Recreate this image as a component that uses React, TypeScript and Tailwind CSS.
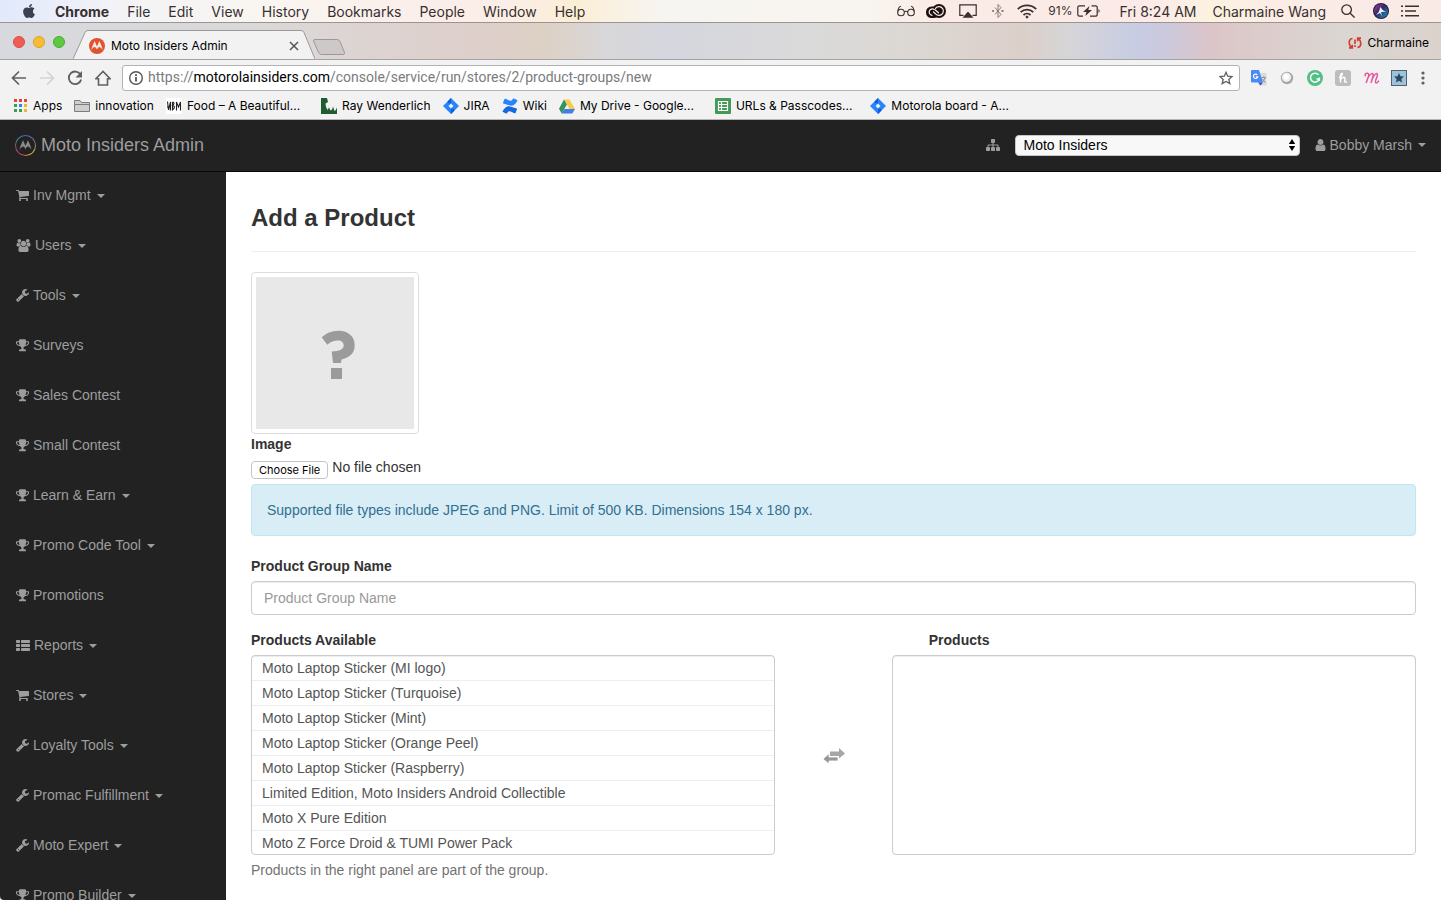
import React, { ReactNode } from "react";
import { FaApple } from "react-icons/fa";

type IconType = React.ComponentType<{ className?: string }>;

function Trophy({ className }: { className?: string }) {
  return (
    <svg viewBox="0 0 1664 1664" className={className} fill="currentColor" aria-hidden="true">
      <path d="M458 777q-74-162-74-369h-256v96q0 78 94.500 162t235.500 111zM1536 504v-96h-256q0 207-74 369 141-27 235.500-111t94.500-162zM1664 376v128q0 71-41.500 143t-112 130-173 97.500-215.500 44.500q-42 54-95 95-38 34-52.500 72.500t-14.500 89.500q0 54 30.500 91t97.500 37q75 0 133.500 45.500t58.500 114.500v64q0 14-9 23t-23 9h-832q-14 0-23-9t-9-23v-64q0-69 58.500-114.500t133.500-45.500q67 0 97.500-37t30.500-91q0-51-14.500-89.500t-52.500-72.500q-53-41-95-95-113-5-215.500-44.500t-173-97.500-112-130-41.500-143v-128q0-40 28-68t68-28h288v-96q0-66 47-113t113-47h576q66 0 113 47t47 113v96h288q40 0 68 28t28 68z" />
    </svg>
  );
}

function Cart({ className }: { className?: string }) {
  return (
    <svg viewBox="64 128 1664 1664" className={className} fill="currentColor" aria-hidden="true">
      <path d="M704 1536q0 52-38 90t-90 38-90-38-38-90 38-90 90-38 90 38 38 90zm896 0q0 52-38 90t-90 38-90-38-38-90 38-90 90-38 90 38 38 90zm128-1088v512q0 24-16.500 42.500t-40.500 21.500l-1044 122q13 60 13 70 0 16-24 64h920q26 0 45 19t19 45-19 45-45 19h-1024q-26 0-45-19t-19-45q0-11 8-31.500t16-36 21.500-40 15.500-29.500l-177-823h-204q-26 0-45-19t-19-45 19-45 45-19h256q16 0 28.500 6.500t19.500 15.500 13 24.500 8 26 5.500 29.500 4.500 26h1201q26 0 45 19t19 45z" />
    </svg>
  );
}

function Wrench({ className }: { className?: string }) {
  return (
    <svg viewBox="64 128 1664 1664" className={className} fill="currentColor" aria-hidden="true">
      <path d="M448 1472q0-26-19-45t-45-19-45 19-19 45 19 45 45 19 45-19 19-45zm644-420l-682 682q-37 37-90 37-52 0-91-37l-106-108q-38-36-38-90 0-53 38-91l681-681q39 98 114.500 173.500t173.500 114.500zm634-435q0 39-23 106-47 134-164.500 217.500t-258.500 83.500q-185 0-316.500-131.500t-131.500-316.500 131.500-316.500 316.500-131.500q58 0 121.500 16.500t107.500 46.500q16 11 16 28t-16 28l-293 169v224l193 107q5-3 79-48.500t135.500-81 70.500-35.500q15 0 23.500 10t8.500 25z" />
    </svg>
  );
}

function Users({ className }: { className?: string }) {
  return (
    <svg viewBox="0 0 1920 1792" className={className} fill="currentColor" aria-hidden="true">
      <path d="M593 896q-162 5-265 128h-134q-82 0-138-40.500t-56-118.500q0-353 124-353 6 0 43.500 21t97.500 42.500 119 21.500q67 0 133-23-5 37-5 66 0 159 93 293zm1071 637q0 120-73 189.500t-194 69.500h-874q-121 0-194-69.500t-73-189.500q0-53 3.500-103.500t14-109 26.500-108.500 43-97.500 62-81 85.500-53.500 111.500-20q10 0 43 21.500t73 48 107 48 135 21.500 135-21.500 107-48 73-48 43-21.500q61 0 111.500 20t85.500 53.500 62 81 43 97.500 26.500 108.500 14 109 3.500 103.500zm-1024-1277q0 106-75 181t-181 75-181-75-75-181 75-181 181-75 181 75 75 181zm704 384q0 159-112.500 271.500t-271.500 112.500-271.500-112.500-112.500-271.500 112.500-271.500 271.500-112.500 271.500 112.500 112.500 271.500zm576 225q0 78-56 118.500t-138 40.500h-134q-103-123-265-128 93-134 93-293 0-29-5-66 66 23 133 23 59 0 119-21.500t97.500-42.500 43.500-21q124 0 124 353zm-128-609q0 106-75 181t-181 75-181-75-75-181 75-181 181-75 181 75 75 181z" />
    </svg>
  );
}

function ListRows({ className }: { className?: string }) {
  return (
    <svg viewBox="0 0 14 13" className={className} fill="currentColor" aria-hidden="true">
      <rect x="0" y="1" width="4" height="3" rx=".7" />
      <rect x="5" y="1" width="9" height="3" rx=".7" />
      <rect x="0" y="5" width="4" height="3" rx=".7" />
      <rect x="5" y="5" width="9" height="3" rx=".7" />
      <rect x="0" y="9" width="4" height="3" rx=".7" />
      <rect x="5" y="9" width="9" height="3" rx=".7" />
    </svg>
  );
}

function Person({ className }: { className?: string }) {
  return (
    <svg viewBox="256 128 1280 1536" className={className} fill="currentColor" aria-hidden="true">
      <path d="M1536 1399q0 109-62.500 187t-150.500 78h-854q-88 0-150.500-78t-62.500-187q0-85 8.500-160.500t31.500-152 58.500-131 94-89 134.500-34.500q131 128 313 128t313-128q76 0 134.500 34.500t94 89 58.500 131 31.500 152 8.500 160.500zm-256-887q0 159-112.500 271.500t-271.500 112.500-271.500-112.500-112.500-271.500 112.500-271.500 271.500-112.500 271.500 112.500 112.500 271.500z" />
    </svg>
  );
}

function Sitemap({ className }: { className?: string }) {
  return (
    <svg viewBox="0 128 1792 1536" className={className} fill="currentColor" aria-hidden="true">
      <path d="M1792 1248v320q0 40-28 68t-68 28h-320q-40 0-68-28t-28-68v-320q0-40 28-68t68-28h96v-192h-512v192h96q40 0 68 28t28 68v320q0 40-28 68t-68 28h-320q-40 0-68-28t-28-68v-320q0-40 28-68t68-28h96v-192h-512v192h96q40 0 68 28t28 68v320q0 40-28 68t-68 28h-320q-40 0-68-28t-28-68v-320q0-40 28-68t68-28h96v-192q0-52 38-90t90-38h512v-192h-96q-40 0-68-28t-28-68v-320q0-40 28-68t68-28h320q40 0 68 28t28 68v320q0 40-28 68t-68 28h-96v192h512q52 0 90 38t38 90v192h96q40 0 68 28t28 68z" />
    </svg>
  );
}

const navItems: { label: string; icon: IconType; iconClass: string; menu?: boolean }[] = [
  { label: "Inv Mgmt", icon: Cart, iconClass: "w-[13px]", menu: true },
  { label: "Users", icon: Users, iconClass: "w-[15px]", menu: true },
  { label: "Tools", icon: Wrench, iconClass: "w-[13px]", menu: true },
  { label: "Surveys", icon: Trophy, iconClass: "w-[13px]" },
  { label: "Sales Contest", icon: Trophy, iconClass: "w-[13px]" },
  { label: "Small Contest", icon: Trophy, iconClass: "w-[13px]" },
  { label: "Learn & Earn", icon: Trophy, iconClass: "w-[13px]", menu: true },
  { label: "Promo Code Tool", icon: Trophy, iconClass: "w-[13px]", menu: true },
  { label: "Promotions", icon: Trophy, iconClass: "w-[13px]" },
  { label: "Reports", icon: ListRows, iconClass: "w-[14px]", menu: true },
  { label: "Stores", icon: Cart, iconClass: "w-[13px]", menu: true },
  { label: "Loyalty Tools", icon: Wrench, iconClass: "w-[13px]", menu: true },
  { label: "Promac Fulfillment", icon: Wrench, iconClass: "w-[13px]", menu: true },
  { label: "Moto Expert", icon: Wrench, iconClass: "w-[13px]", menu: true },
  { label: "Promo Builder", icon: Trophy, iconClass: "w-[13px]", menu: true },
];

const products = [
  "Moto Laptop Sticker (MI logo)",
  "Moto Laptop Sticker (Turquoise)",
  "Moto Laptop Sticker (Mint)",
  "Moto Laptop Sticker (Orange Peel)",
  "Moto Laptop Sticker (Raspberry)",
  "Limited Edition, Moto Insiders Android Collectible",
  "Moto X Pure Edition",
  "Moto Z Force Droid & TUMI Power Pack",
];

function Caret() {
  return <span className="ml-[2px] h-0 w-0 border-x-4 border-t-4 border-x-transparent border-t-current" />;
}

function Batwing({ className, fill }: { className: string; fill: string }) {
  return (
    <svg viewBox="0 0 24 24" className={className} aria-hidden="true">
      <path fill={fill} d="M8.500 4.500 L12 12.500 L15.500 4.500 C17.500 9 19.800 13.500 20.500 18 C19 15.500 17 13.500 15.500 13.500 C14 13.500 12.800 15 12 17.500 C11.200 15 10 13.500 8.500 13.500 C7 13.500 5 15.500 3.500 18 C4.200 13.500 6.500 9 8.500 4.500Z" />
    </svg>
  );
}

/* ---------- macOS menu bar ---------- */

function MenuBar() {
  return (
    <header className="flex h-[23px] shrink-0 items-center justify-between border-b border-[#9d9490] bg-[linear-gradient(90deg,#e2e9fb_0%,#f3f3f7_8%,#f9f6f1_18%,#fbeeea_30%,#fbeee8_35%,#fbeed6_40%,#f7f5f1_46%,#f8f5f0_60%,#fbebe6_65%,#fbeae7_80%,#fcf2e0_84%,#fbece6_89%,#f9eae6_100%)] pr-[22px] pl-[21px] text-[14px] text-[#38302f]">
      <nav aria-label="Application menu" className="flex items-center gap-[18px]">
        <FaApple className="size-[16px] text-[#3a4152]" />
        <span className="font-bold">Chrome</span>
        <span>File</span>
        <span>Edit</span>
        <span>View</span>
        <span>History</span>
        <span>Bookmarks</span>
        <span>People</span>
        <span>Window</span>
        <span>Help</span>
      </nav>
      <div className="flex items-center">
        <svg viewBox="0 0 18 12" className="mr-[11px] h-[12px] w-[18px]" fill="none" stroke="currentColor" strokeWidth="1.100">
          <circle cx="4" cy="7.500" r="3.300" />
          <circle cx="14" cy="7.500" r="3.300" />
          <path d="M7.300 7 Q9 5.500 10.700 7 M.8 6.500 Q1.500 1.500 4 1.300 M17.200 6.500 Q16.500 1.500 14 1.300" />
        </svg>
        <svg viewBox="0 0 20 14" className="mr-[13px] h-[14px] w-[20px]">
          <rect x="0" y="2.500" width="13" height="11.500" rx="5.500" fill="#1c1010" />
          <circle cx="13" cy="7" r="7" fill="#1c1010" />
          <g fill="none" stroke="#fbeeea" strokeWidth="1.200" strokeLinecap="round">
            <path d="M9.500 4.300A4.400 4.400 0 1 1 13 11.400Q11 11.400 9.500 9.800L7.500 8M8.200 5.500A3.200 3.200 0 1 0 6 11.300M12.500 8.800 9.300 6" />
          </g>
        </svg>
        <svg viewBox="0 0 18 14" className="mr-[15px] h-[14px] w-[18px]">
          <path fill="none" stroke="currentColor" strokeWidth="1.200" d="M4.500 11.300H.8V.8h16.400v10.500h-3.700" />
          <path fill="currentColor" d="m9 7.500 5.500 6.200h-11z" />
        </svg>
        <svg viewBox="0 0 12 16" className="mr-[13px] h-[16px] w-[12px]" fill="none" stroke="#857c7b" strokeWidth="1">
          <path d="m3 4.500 6 7L6 14.500v-13l3 3-6 7" />
          <path strokeWidth="1.800" d="M.2 8H2M4.800 8h2M9.500 8h2" />
        </svg>
        <svg viewBox="0 0 20 15" className="mr-[11px] h-[15px] w-[20px]" fill="none" stroke="currentColor" strokeWidth="1.800">
          <path d="M.8 5.200a13.200 13.200 0 0 1 18.400 0M3.700 8.200a9 9 0 0 1 12.600 0M6.500 11a5 5 0 0 1 7 0" />
          <circle cx="10" cy="13" r="1" fill="currentColor" strokeWidth="1" />
        </svg>
        <span className="mr-[5px] text-[12px]">91%</span>
        <svg viewBox="0 0 24 12" className="mr-[18px] h-[12px] w-[24px]">
          <path fill="none" stroke="currentColor" strokeWidth="1.200" d="M8 .8H2.500a1.700 1.700 0 0 0-1.700 1.700v7a1.700 1.700 0 0 0 1.700 1.700H6M14.500 .8h4a1.700 1.700 0 0 1 1.700 1.700v7a1.700 1.700 0 0 1-1.700 1.700H13" />
          <path fill="currentColor" d="M12.500 1 6 7h3.500L8.300 11 15 5h-3.700zM21.500 4q2.300 2 0 4z" />
        </svg>
        <span className="mr-[16px]">Fri 8:24 AM</span>
        <span className="mr-[15px]">Charmaine Wang</span>
        <svg viewBox="0 0 14 14" className="mr-[18px] size-[14px]" fill="none" stroke="currentColor" strokeWidth="1.300">
          <circle cx="5.600" cy="5.600" r="4.800" />
          <path d="m9.200 9.200 4.400 4.400" />
        </svg>
        <svg viewBox="0 0 16 16" className="mr-[12px] size-[16px]">
          <defs>
            <linearGradient id="siri" x1="0" y1="0" x2="1" y2="1">
              <stop offset="0" stopColor="#c03a8e" />
              <stop offset=".45" stopColor="#2f2a68" />
              <stop offset="1" stopColor="#1b9cc4" />
            </linearGradient>
          </defs>
          <circle cx="8" cy="8" r="8" fill="#1f1b3c" />
          <circle cx="8" cy="8" r="7" fill="url(#siri)" />
          <path fill="#e8f3ff" d="M7.500 4q1.500 3.500 5.500 5-3.500-.5-5 .5l1 4-2-3.500L3 12q3.500-3 4.500-8Z" />
        </svg>
        <svg viewBox="0 0 18 12" className="h-[12px] w-[18px]" fill="currentColor">
          <path d="M0 .5h2v1.600H0zM4 .5h14v1.600H4zM0 5.200h2v1.600H0zM4 5.200h11v1.600H4zM0 9.900h2v1.600H0zM4 9.900h14v1.600H4z" />
        </svg>
      </div>
    </header>
  );
}

/* ---------- Browser chrome ---------- */

function TabStrip() {
  return (
    <div className="flex h-[36px] shrink-0 justify-between bg-[linear-gradient(90deg,#d8d9de_0%,#d9d9da_15%,#dcd6d4_22%,#decfcb_33%,#ddd1c5_38%,#d8d7d9_42%,#d5d6de_46%,#dadada_56%,#dcd7d2_64%,#dccfca_71%,#d6d5d7_74%,#c7cce3_79%,#ccc9dc_81%,#dcc5c8_84%,#dccdcc_88%,#dad6d2_93%,#dbd2cc_100%)] pl-[13px]">
      <div className="flex">
        <div className="flex items-center gap-[8px] pt-[2px]">
          <span className="size-[12px] rounded-full border border-[#dd4b44] bg-[#ee5c54]" />
          <span className="size-[12px] rounded-full border border-[#dfa023] bg-[#f8bd32]" />
          <span className="size-[12px] rounded-full border border-[#48ad31] bg-[#5dc841]" />
        </div>
        <div className="relative ml-[8px] flex w-[242px] items-center pt-[9px] pl-[16px]">
          <svg viewBox="0 0 242 29" preserveAspectRatio="none" className="absolute bottom-0 left-0 h-[29px] w-full" aria-hidden="true">
            <path fill="#f2f2f2" stroke="#999" d="M0 29 L12 2.500 Q13 .5 15 .5 H228 Q230 .5 231 2.500 L242 29" />
          </svg>
          <svg viewBox="0 0 16 16" className="relative size-[16px]" aria-hidden="true">
            <circle cx="8" cy="8" r="8" fill="#e0532f" />
            <path fill="#f6e9e2" d="M5.700 3 8 8.500 10.300 3Q13 8 13.700 12 12 9 10.300 9 9 9 8 11.500 7 9 5.700 9 4 9 2.300 12 3 8 5.700 3Z" />
          </svg>
          <span className="relative ml-[6px] text-[12px] text-black">Moto Insiders Admin</span>
          <button aria-label="Close tab" className="relative mr-[16px] ml-auto">
            <svg viewBox="0 0 10 10" className="size-[10px]" stroke="#555" strokeWidth="1.500">
              <path d="m1 1 8 8M9 1 1 9" />
            </svg>
          </button>
        </div>
        <button aria-label="New tab" className="mt-[16px] -ml-[3px] h-[16px]">
          <svg viewBox="0 0 34 16" className="h-[16px] w-[34px]">
            <path fill="#ccc9c8" stroke="#999" d="M3 .5H25Q27 .5 28 2.500L32.500 13.500Q33 15.500 31 15.500H9.500Q7.500 15.500 6.500 13.500L1.500 2Q1 .5 3 .5Z" />
          </svg>
        </button>
      </div>
      <div className="flex items-center gap-[5px] pt-[3px] pr-[12px] text-[12px] text-black">
        <svg viewBox="0 0 14 12" className="h-[12px] w-[14px]" fill="none" stroke="#d23f31" strokeWidth="1.700">
          <path d="M4.500 1.500Q1 2 1.200 6q.1 2.500 2.300 4.300M4.300 7.800v3H1M9.500 10.500Q13 10 12.800 6q-.1-2.500-2.300-4.300M9.700 4.200v-3H13M7 2.500V7M7 8.300V10" />
        </svg>
        <span>Charmaine</span>
      </div>
    </div>
  );
}

function Toolbar() {
  return (
    <div className="flex h-[38px] shrink-0 items-center border-t border-[#a3a3a3] bg-[#f2f2f2] pr-[14px] pb-[2px] pl-[11px] text-[#5f5f64]">
      <div className="flex items-center gap-[12px]">
        <button aria-label="Back">
          <svg viewBox="0 0 16 16" className="size-[16px]" fill="none" stroke="currentColor" strokeWidth="1.700">
            <path d="M15 8H2M8 1.500 1.500 8 8 14.500" />
          </svg>
        </button>
        <button aria-label="Forward" className="text-[#d3d3d5]">
          <svg viewBox="0 0 16 16" className="size-[16px]" fill="none" stroke="currentColor" strokeWidth="1.700">
            <path d="M1 8h13M8 1.500 14.500 8 8 14.500" />
          </svg>
        </button>
        <button aria-label="Reload">
          <svg viewBox="0 0 16 16" className="size-[16px]">
            <path fill="none" stroke="currentColor" strokeWidth="1.800" d="M13.500 4.500A6.300 6.300 0 1 0 14.200 9.500" />
            <path fill="currentColor" d="M15 1v6.500H8.500z" />
          </svg>
        </button>
        <button aria-label="Home">
          <svg viewBox="0 0 16 16" className="size-[16px]" fill="none" stroke="currentColor" strokeWidth="1.600">
            <path d="M.8 8.800 8 1.500l7.200 7.300H12.500V15H3.500V8.800Z" />
          </svg>
        </button>
      </div>
      <div className="ml-[11px] flex h-[26px] min-w-0 flex-1 items-center rounded-[3px] border border-[#b3b3b3] bg-white px-[6px]">
        <svg viewBox="0 0 14 14" className="size-[14px] shrink-0" fill="none" stroke="#55555a" strokeWidth="1.400">
          <circle cx="7" cy="7" r="6.300" />
          <path strokeWidth="1.800" d="M7 6v4.500M7 3.200V5" />
        </svg>
        <p className="ml-[5px] flex-1 truncate font-['Roboto',sans-serif] text-[14px] text-[#7b7b7b]">
          https://<span className="text-black">motorolainsiders.com</span>/console/service/run/stores/2/product-groups/new
        </p>
        <button aria-label="Bookmark this page">
          <svg viewBox="0 0 14 14" className="size-[14px]" fill="none" stroke="#5f5f64" strokeWidth="1.300">
            <path d="m7 1.300 1.700 3.900 4.300.4-3.200 2.800 1 4.200L7 10.400l-3.800 2.200 1-4.200L1 5.600l4.300-.4z" />
          </svg>
        </button>
      </div>
      <div className="ml-[11px] flex items-center gap-[12px]">
        <svg viewBox="0 0 16 16" className="size-[16px]">
          <path fill="#dadada" d="M6 3h9.500v12.500H8z" />
          <path fill="#4a8af4" d="M1 0h7l4 12.500H1a1 1 0 0 1-1-1V1a1 1 0 0 1 1-1z" />
          <path fill="#3458c9" d="M7 12.500h5L9.500 15.500z" />
          <path fill="none" stroke="#fff" strokeWidth="1.200" d="M6.300 4.800a2.200 2.200 0 1 0 .5 2H4.800" />
          <path fill="none" stroke="#8296a5" strokeWidth="1" d="M10.500 7.500h4.500M12.700 6.500v1M14 7.500q-.8 3-2.500 4.500M11.500 9q1 2 3 3.500" />
        </svg>
        <svg viewBox="0 0 16 16" className="size-[16px]">
          <circle cx="8" cy="8" r="6.200" fill="#a7a7a7" />
          <circle cx="7.500" cy="7.300" r="4.600" fill="#f0f0f0" />
          <circle cx="7" cy="7" r="2.500" fill="#fff" />
        </svg>
        <svg viewBox="0 0 16 16" className="size-[16px]">
          <circle cx="8" cy="8" r="8" fill="#52bf84" />
          <path fill="none" stroke="#fff" strokeWidth="1.500" d="M11.500 4.800A4.500 4.500 0 1 0 12.300 9H9.500M12.400 7.500V11" />
        </svg>
        <svg viewBox="0 0 16 16" className="size-[16px]">
          <rect width="16" height="16" rx="3" fill="#bdbdbd" />
          <path fill="none" stroke="#fff" strokeWidth="1.500" d="M4 7.500q3-1 3.300-4Q5.500 3 5.500 8v4.500M5.500 9.500q3-3.500 4.300-1.500.8 1.500-.3 3.500.8 1.500 2.500 0" />
        </svg>
        <svg viewBox="0 0 18 16" className="h-[16px] w-[16px] overflow-visible" fill="none" stroke="#e94f9b" strokeWidth="1.600" strokeLinecap="round">
          <path d="M2.500 5.500Q2 2.500 5 2.500q2 .5 1 4L3.500 13.500Q6.500 3.500 10.500 2.800q1.500.5.500 4L9 13.500Q12 3.500 15.500 2.800q1.500.7 0 4.500-2.500 5.500-1 6.200 1.500.3 3-2" />
        </svg>
        <svg viewBox="0 0 16 16" className="size-[16px]">
          <rect x=".5" y=".5" width="15" height="15" fill="#9dc3da" stroke="#52616d" />
          <path fill="#2b485e" d="m8 3 1.400 3.300 3.600.3-2.700 2.400.8 3.500L8 10.700l-3.100 1.800.8-3.500L3 6.600l3.600-.3z" />
        </svg>
        <button aria-label="Browser menu">
          <svg viewBox="0 0 8 16" className="h-[16px] w-[8px]" fill="currentColor">
            <circle cx="4" cy="3" r="1.600" />
            <circle cx="4" cy="8" r="1.600" />
            <circle cx="4" cy="13" r="1.600" />
          </svg>
        </button>
      </div>
    </div>
  );
}

function Jira() {
  return (
    <svg viewBox="0 0 16 16" className="size-[16px] shrink-0">
      <path fill="#2684ff" d="m8 0 8 8-8 8-8-8z" />
      <path fill="#0f5fd6" d="M8 0 4.500 3.500Q4.500 6 8 5.500zM8 16l3.500-3.500Q11.500 10 8 10.500z" />
      <path fill="#f2f2f2" d="m8 5.500 2.500 2.500L8 10.500 5.500 8z" />
    </svg>
  );
}

function Bookmark({ icon, children }: { icon: ReactNode; children: ReactNode }) {
  return (
    <a href="#" className="flex items-center gap-[5px] whitespace-nowrap">
      {icon}
      {children}
    </a>
  );
}

function BookmarkBar() {
  return (
    <nav aria-label="Bookmarks" className="flex h-[23px] shrink-0 items-start gap-[12px] border-b border-[#b6b4b6] bg-[#f2f2f2] pl-[14px] text-[12px] leading-[18px] text-black">
      <Bookmark
        icon={
          <svg viewBox="0 0 14 14" className="size-[14px]">
            <path fill="#ea4335" d="M0 0h3v3H0zM5 0h3v3H5zM10 0h3v3h-3z" />
            <path fill="#34a05a" d="M0 5h3v3H0zM0 10h3v3H0zM5 10h3v3H5z" />
            <path fill="#2f86eb" d="M5 5h3v3H5z" />
            <path fill="#f6b32c" d="M10 5h3v3h-3zM10 10h3v3h-3z" />
          </svg>
        }
      >
        Apps
      </Bookmark>
      <Bookmark
        icon={
          <svg viewBox="0 0 16 14" className="h-[14px] w-[16px]">
            <path fill="#cfcfcf" stroke="#7c7c7c" d="M.5 1.500h5.500l1.500 2h8v9H.5zM.5 5.500h15" />
          </svg>
        }
      >
        innovation
      </Bookmark>
      <Bookmark
        icon={
          <svg viewBox="0 0 16 16" className="size-[16px]">
            <path fill="#fff" d="M0 0h16v16H0z" />
            <path fill="none" stroke="#222" strokeWidth="1.100" d="M1.500 3.500 2.500 12M2.500 12 4.500 4v8.500M1 9h4M6.500 4v8.500M6.500 4q3 .5 0 3.500 4 .8 0 4.500M10.500 12.500V4l2 5 2-5v8.500" />
          </svg>
        }
      >
        Food – A Beautiful...
      </Bookmark>
      <div className="ml-[9px]">
        <Bookmark
          icon={
            <svg viewBox="0 0 16 16" className="size-[16px]">
              <path fill="#1f5c32" d="M0 0h16v16H0z" />
              <path fill="#f2f2f2" d="M6 0h10v9.500q-1 3-2.500 3.500L12 8.500Q11.500 12 9.500 12.500L8 9.500 6.500 12Q4.500 9 4.500 5.500L7 4z" />
            </svg>
          }
        >
          Ray Wenderlich
        </Bookmark>
      </div>
      <Bookmark icon={<Jira />}>JIRA</Bookmark>
      <Bookmark
        icon={
          <svg viewBox="0 0 16 16" className="size-[16px]">
            <path fill="#2684ff" d="M1 4.800 2.500 1Q3 .4 3.700.8 7.500 3 9 2.800 10 2.600 11 .8q.4-.6 1-.3l3 1.400q.6.4.3 1Q12 9 7 7.300 5 6.500 1.300 5.500.8 5.300 1 4.800Z" />
            <path fill="#1668e0" d="M15 11.200 13.500 15q-.5.6-1.200.2Q8.500 13 7 13.200 6 13.400 5 15.200q-.4.600-1 .3L1 14.100q-.6-.4-.3-1Q4 7 9 8.700q2 .8 5.700 1.800.5.200.3.7Z" />
          </svg>
        }
      >
        Wiki
      </Bookmark>
      <Bookmark
        icon={
          <svg viewBox="0 0 16 15" className="h-[15px] w-[16px]">
            <path fill="#f9ca45" d="M5 .5h5.500L16 10h-5.500z" />
            <path fill="#35935b" d="M5 .5 0 9.800l2.700 4.700 5.200-9z" />
            <path fill="#3f7fe8" d="M5.400 10H16l-2.700 4.500H2.700z" />
          </svg>
        }
      >
        My Drive - Google...
      </Bookmark>
      <div className="ml-[9px]">
        <Bookmark
          icon={
            <svg viewBox="0 0 16 16" className="size-[16px]">
              <rect width="16" height="16" rx="1" fill="#439a57" />
              <path fill="none" stroke="#fff" strokeWidth="1.200" d="M3.500 3.500h9v9h-9zM3.500 6.500h9M3.500 9.500h9M6.500 3.500v9" />
            </svg>
          }
        >
          URLs &amp; Passcodes...
        </Bookmark>
      </div>
      <div className="ml-[6px]">
        <Bookmark icon={<Jira />}>Motorola board - A...</Bookmark>
      </div>
    </nav>
  );
}

/* ---------- Page ---------- */

function Navbar() {
  return (
    <header className="flex h-[52px] shrink-0 items-center justify-between border-b border-[#080808] bg-[#222] px-[15px] pb-px text-[#9d9d9d]">
      <a href="#" className="flex items-center gap-[5px] text-[18px] leading-5">
        <span className="size-[21px] rounded-full bg-[conic-gradient(#4267c9,#8a8a70_25%,#d9c23a_40%,#c84a4a_55%,#b03d90_70%,#4a8f8a_85%,#4267c9)] p-px">
          <span className="flex size-full items-center justify-center rounded-full bg-[#222]">
            <Batwing className="size-[17px]" fill="#8a8a8a" />
          </span>
        </span>
        Moto Insiders Admin
      </a>
      <div className="flex items-center text-[14px]">
        <Sitemap className="mr-[15px] h-[12px] w-[14px]" />
        <div className="relative mr-[15px] flex items-center">
          <select aria-label="Store" className="h-[21px] w-[285px] appearance-none rounded-[4px] border border-[#c6c6c6] bg-[#f8f8f8] pl-[8px] text-[14px] leading-[18px] text-black">
            <option>Moto Insiders</option>
          </select>
          <svg viewBox="0 0 8 14" className="pointer-events-none absolute right-[4px] h-[14px] w-[8px]">
            <path d="M4 1 7.200 6H.8zM4 13 .8 8h6.400z" />
          </svg>
        </div>
        <button className="flex items-center gap-[4px]">
          <Person className="h-[12px] w-[11px]" />
          Bobby Marsh
          <Caret />
        </button>
      </div>
    </header>
  );
}

function Sidebar() {
  return (
    <nav aria-label="Main" className="w-[226px] shrink-0 overflow-hidden bg-[#222] text-[14px] text-[#9d9d9d]">
      <ul>
        {navItems.map(({ label, icon: Icon, iconClass, menu }) => (
          <li key={label}>
            <a href="#" className="flex h-[50px] items-center gap-[4px] pb-[3px] pl-[16px]">
              <Icon className={`h-[13px] shrink-0 ${iconClass}`} />
              {label}
              {menu && <Caret />}
            </a>
          </li>
        ))}
      </ul>
    </nav>
  );
}

function ProductForm() {
  return (
    <main className="min-w-0 flex-1 overflow-hidden bg-white px-[25px] pt-[30px] text-[14px] leading-5 text-[#333]">
      <h1 className="border-b border-[#eee] pb-[17px] text-[24px] leading-[32px] font-bold">Add a Product</h1>
      <form className="pt-[20px]" onSubmit={(e) => e.preventDefault()}>
        <div className="flex h-[162px] w-[168px] rounded-[4px] border border-[#ddd] p-[4px]">
          <svg viewBox="0 0 158 152" className="size-full bg-[#e8e8e8]" role="img" aria-label="No image">
            <path fill="#9b9b9b" d="M65.700 60.300Q72 53.700 82.300 53.700C93 53.700 98.700 60 98.700 68.300 98.700 77 92.500 81 85.500 82.500L85 86H77L75.700 74.500C83 74.300 87.700 72.500 87.700 68.500 87.700 65.500 85.500 63.500 82 63.500Q76 63.500 71.300 67.700Z" />
            <path fill="#9b9b9b" d="M75 91h11v11H75z" />
          </svg>
        </div>
        <label htmlFor="image" className="block font-bold">Image</label>
        <div className="mt-[3px] mb-px flex h-[26px] gap-[4px]">
          <input id="image" type="file" className="peer sr-only" />
          <button type="button" className="mt-[4px] h-[18px] rounded-[4px] border border-[#c4c4c4] bg-white px-[7px] font-['Inter',sans-serif] text-[11px] leading-[16px] text-black" onClick={() => document.getElementById("image")?.click()}>
            Choose File
          </button>
          <span>No file chosen</span>
        </div>
        <p className="rounded-[4px] border border-[#bce8f1] bg-[#d9edf7] p-[15px] text-[#31708f]">
          Supported file types include JPEG and PNG. Limit of 500 KB. Dimensions 154 x 180 px.
        </p>
        <label htmlFor="group-name" className="mt-[20px] mb-[5px] block font-bold">Product Group Name</label>
        <input
          id="group-name"
          type="text"
          placeholder="Product Group Name"
          className="block h-[34px] w-full rounded-[4px] border border-[#ccc] px-[12px] shadow-[inset_0_1px_1px_rgba(0,0,0,0.075)] placeholder:text-[#999]"
        />
        <div className="mt-[15px] grid grid-cols-[9fr_2fr_9fr]">
          <h2 className="mb-[5px] font-bold">Products Available</h2>
          <span />
          <h2 className="mb-[5px] pl-[37px] font-bold">Products</h2>
          <ul className="h-[200px] overflow-hidden rounded-[4px] border border-[#ccc] text-[#555] shadow-[inset_0_1px_1px_rgba(0,0,0,0.075)]">
            {products.map((name) => (
              <li key={name} className="h-[25px] border-b border-[#eee] px-[10px] pt-[2px]">{name}</li>
            ))}
          </ul>
          <svg viewBox="0 0 22 18" className="h-[18px] w-[22px] self-center justify-self-center" aria-hidden="true">
            <path fill="#a6a6a6" d="M7 5.500h9V2l6 5.500-6 5V10H7z" />
            <path fill="#989898" stroke="#fff" strokeWidth=".8" d="M15 11H6V7.500L0 13l6 5v-3h9z" />
          </svg>
          <div className="h-[200px] rounded-[4px] border border-[#ccc] shadow-[inset_0_1px_1px_rgba(0,0,0,0.075)]" />
        </div>
        <p className="mt-[5px] text-[#737373]">Products in the right panel are part of the group.</p>
      </form>
    </main>
  );
}

export default function App() {
  return (
    <div className="flex h-screen flex-col overflow-hidden bg-white pb-[8px] font-['Inter',sans-serif]">
      <MenuBar />
      <TabStrip />
      <Toolbar />
      <BookmarkBar />
      <div className="flex min-h-0 flex-1 flex-col overflow-hidden rounded-b-[4px] font-['Liberation_Sans',Arial,sans-serif]">
        <Navbar />
        <div className="flex min-h-0 flex-1">
          <Sidebar />
          <ProductForm />
        </div>
      </div>
    </div>
  );
}
